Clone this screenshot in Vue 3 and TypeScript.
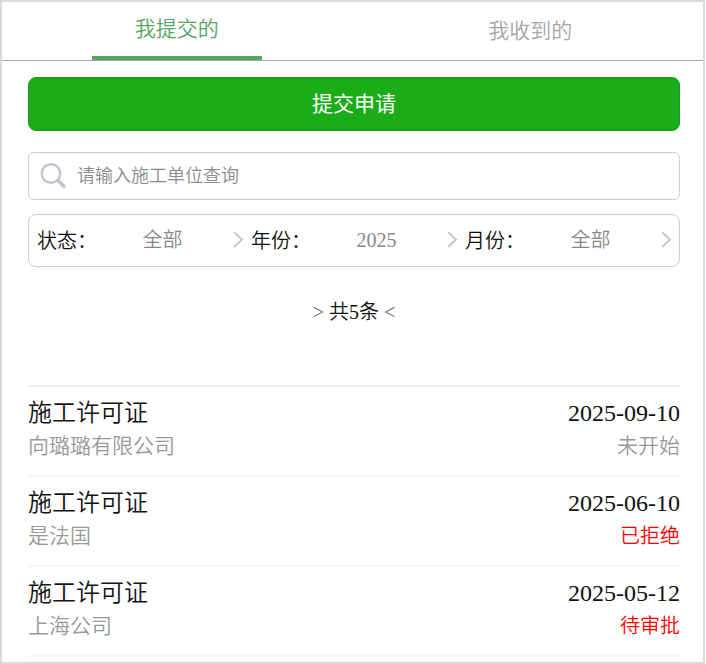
<script setup lang="ts">
import { ref } from 'vue'

interface Filter {
  id: string
  label: string
  value: string
}

interface Permit {
  title: string
  company: string
  date: string
  status: string
  alert: boolean
}

const tabs: string[] = ['我提交的', '我收到的']
const activeTab = ref(0)
const keyword = ref('')
const total = ref(5)

const filters = ref<Filter[]>([
  { id: 'status', label: '状态：', value: '全部' },
  { id: 'year', label: '年份：', value: '2025' },
  { id: 'month', label: '月份：', value: '全部' },
])

const permits = ref<Permit[]>([
  { title: '施工许可证', company: '向璐璐有限公司', date: '2025-09-10', status: '未开始', alert: false },
  { title: '施工许可证', company: '是法国', date: '2025-06-10', status: '已拒绝', alert: true },
  { title: '施工许可证', company: '上海公司', date: '2025-05-12', status: '待审批', alert: true },
])
</script>

<template>
  <div class="page">
    <nav class="tabs">
      <button
        v-for="(tab, index) in tabs"
        :key="tab"
        type="button"
        class="tab"
        :class="{ active: activeTab === index }"
        @click="activeTab = index"
      >
        {{ tab }}
      </button>
    </nav>

    <main class="content">
      <button type="button" class="submit">提交申请</button>

      <label class="search">
        <svg class="search-icon" viewBox="0 0 26 26" aria-hidden="true">
          <circle cx="11" cy="10.5" r="9.3" />
          <path d="M18 17.5l6 6" />
        </svg>
        <input v-model="keyword" type="text" placeholder="请输入施工单位查询" />
      </label>

      <div class="filters">
        <div v-for="filter in filters" :key="filter.id" class="filter">
          <label :for="filter.id">{{ filter.label }}</label>
          <select :id="filter.id" v-model="filter.value">
            <option :value="filter.value">{{ filter.value }}</option>
          </select>
          <svg class="chevron" viewBox="0 0 12 18" aria-hidden="true">
            <path d="M2 1l8 7.5l-8 7.5" />
          </svg>
        </div>
      </div>

      <p class="count"><span>&gt;</span> 共{{ total }}条 <span>&lt;</span></p>

      <ul class="list">
        <li v-for="permit in permits" :key="permit.date" class="row">
          <div class="line primary">
            <span>{{ permit.title }}</span>
            <time>{{ permit.date }}</time>
          </div>
          <div class="line secondary">
            <span>{{ permit.company }}</span>
            <span :class="{ alert: permit.alert }">{{ permit.status }}</span>
          </div>
        </li>
      </ul>
    </main>
  </div>
</template>

<style>
body {
  background: #fff;
}
</style>

<style scoped>
.page {
  box-sizing: border-box;
  min-height: 100vh;
  margin-right: 1px;
  border: 2px solid #d9d9d9;
  color: #111;
  font-family: 'Liberation Serif', 'Noto Sans CJK SC', serif;
  font-weight: 350;
}

button,
input,
select {
  margin: 0;
  padding: 0;
  border: 0;
  background: none;
  font-family: inherit;
  font-weight: inherit;
}

.tabs {
  display: grid;
  grid-template-columns: 1fr 1fr;
  column-gap: 8px;
  justify-items: center;
  height: 58px;
  padding-left: 2px;
  border-bottom: 1px solid #a6a6a6;
}

.tab {
  width: 170px;
  padding-bottom: 4px;
  color: #a6a6a6;
  font-size: 21px;
}

.tab.active {
  border-bottom: 4px solid #55a562;
  color: #55a562;
}

.content {
  padding: 16px 23px 0 26px;
}

.submit {
  display: block;
  width: 100%;
  height: 54px;
  padding-bottom: 4px;
  border: 1px solid #189c17;
  border-radius: 8px;
  background: #1aad19;
  color: #fff;
  font-size: 21px;
  font-weight: 400;
}

.search {
  display: flex;
  align-items: center;
  box-sizing: border-box;
  height: 48px;
  margin-top: 21px;
  padding: 0 11px;
  border: 1px solid #ccc;
  border-radius: 6px;
}

.search-icon {
  flex: none;
  width: 26px;
  height: 26px;
  fill: none;
  stroke: #c0c4cc;
  stroke-width: 2.4;
  stroke-linecap: round;
}

.search-icon path {
  stroke-width: 3.4;
}

.search input {
  flex: 1;
  min-width: 0;
  height: 44px;
  margin-left: 11px;
  outline: none;
  color: #111;
  font-size: 18px;
}

.search input::placeholder {
  color: #8c8c8c;
  opacity: 1;
}

.filters {
  display: grid;
  grid-template-columns: repeat(3, 1fr);
  box-sizing: border-box;
  height: 53px;
  margin-top: 14px;
  padding: 0 0 2px 8px;
  border: 1px solid #ccc;
  border-radius: 8px;
  font-size: 20px;
}

.filter {
  display: flex;
  align-items: center;
  padding-right: 7px;
}

.filter label {
  flex: none;
  width: 60px;
  white-space: nowrap;
}

.filter select {
  flex: 1;
  min-width: 0;
  height: 40px;
  appearance: none;
  color: #888;
  font-size: 20px;
  text-align: center;
  text-align-last: center;
}

.chevron {
  flex: none;
  width: 12px;
  height: 18px;
  margin-left: 4px;
  fill: none;
  stroke: #c8c8cd;
  stroke-width: 2;
}

.count {
  margin: 29px 0 57px;
  font-size: 20px;
  line-height: 32px;
  text-align: center;
}

.count span {
  color: #666;
}

.list {
  margin: 0;
  padding: 0;
  border-top: 2px solid #ececec;
  list-style: none;
}

.row {
  padding: 9px 0 13px;
  border-bottom: 2px solid #f5f5f5;
}

.line {
  display: flex;
  justify-content: space-between;
}

.primary {
  font-size: 24px;
  line-height: 34px;
}

.secondary {
  color: #999;
  font-size: 21px;
  line-height: 32px;
}

.alert {
  color: #f00;
  font-size: 20px;
}
</style>
